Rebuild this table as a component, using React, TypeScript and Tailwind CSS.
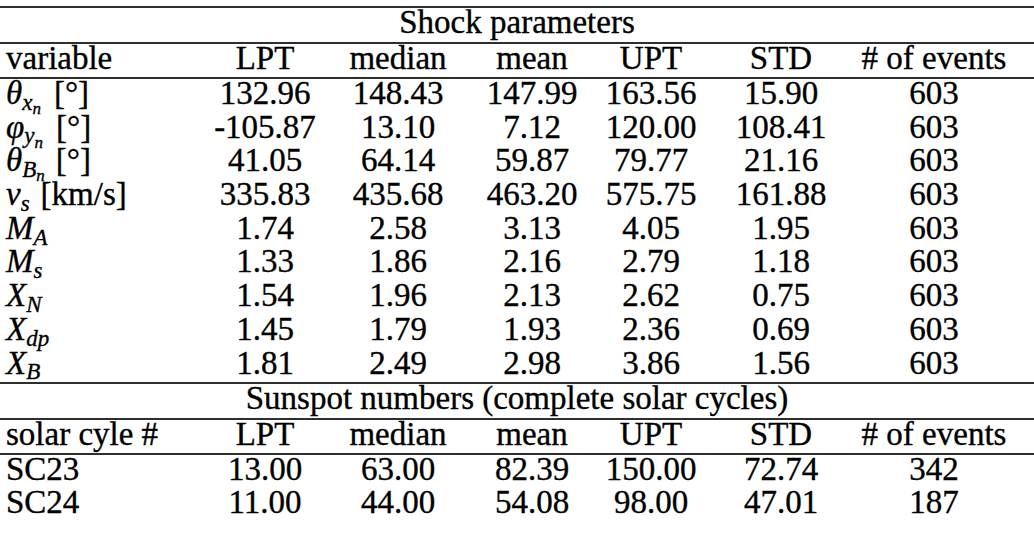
import React from "react";

const COLS =
  "grid grid-cols-[199px_132px_134px_134px_104px_156px_150px] w-full";

function Rule() {
  return <div className="h-[2px] w-full bg-[#2e2e2e]" />;
}

function Sub({ children }: { children: React.ReactNode }) {
  return <sub className="italic text-[23px]">{children}</sub>;
}

function SubSub({ children }: { children: React.ReactNode }) {
  return <sub className="italic text-[17px]">{children}</sub>;
}

const labels: React.ReactNode[] = [
  <>
    <span className="italic">θ</span>
    <Sub>
      x<SubSub>n</SubSub>
    </Sub>
    <span className="ml-[13px]">[°]</span>
  </>,
  <>
    <span className="italic">φ</span>
    <Sub>
      y<SubSub>n</SubSub>
    </Sub>
    <span className="ml-[13px]">[°]</span>
  </>,
  <>
    <span className="italic">θ</span>
    <Sub>
      B<SubSub>n</SubSub>
    </Sub>
    <span className="ml-[11px]">[°]</span>
  </>,
  <>
    <span className="italic">v</span>
    <Sub>s</Sub>
    <span className="ml-[11px]">[km/s]</span>
  </>,
  <>
    <span className="italic">M</span>
    <Sub>A</Sub>
  </>,
  <>
    <span className="italic">M</span>
    <Sub>s</Sub>
  </>,
  <>
    <span className="italic">X</span>
    <Sub>N</Sub>
  </>,
  <>
    <span className="italic">X</span>
    <Sub>dp</Sub>
  </>,
  <>
    <span className="italic">X</span>
    <Sub>B</Sub>
  </>,
];

const shockData: string[][] = [
  ["132.96", "148.43", "147.99", "163.56", "15.90", "603"],
  ["-105.87", "13.10", "7.12", "120.00", "108.41", "603"],
  ["41.05", "64.14", "59.87", "79.77", "21.16", "603"],
  ["335.83", "435.68", "463.20", "575.75", "161.88", "603"],
  ["1.74", "2.58", "3.13", "4.05", "1.95", "603"],
  ["1.33", "1.86", "2.16", "2.79", "1.18", "603"],
  ["1.54", "1.96", "2.13", "2.62", "0.75", "603"],
  ["1.45", "1.79", "1.93", "2.36", "0.69", "603"],
  ["1.81", "2.49", "2.98", "3.86", "1.56", "603"],
];

const sunData: { label: string; values: string[] }[] = [
  { label: "SC23", values: ["13.00", "63.00", "82.39", "150.00", "72.74", "342"] },
  { label: "SC24", values: ["11.00", "44.00", "54.08", "98.00", "47.01", "187"] },
];

const headers = ["LPT", "median", "mean", "UPT", "STD", "# of events"];

function HeaderRow({ first }: { first: string }) {
  return (
    <div className={COLS + " h-[33px] leading-[29px]"}>
      <div className="pl-[6px] whitespace-nowrap">{first}</div>
      {headers.map((h) => (
        <div key={h} className="text-center whitespace-nowrap">
          {h}
        </div>
      ))}
    </div>
  );
}

function DataRow({
  label,
  values,
  height,
}: {
  label: React.ReactNode;
  values: string[];
  height: string;
}) {
  return (
    <div className={COLS + " leading-[29px] " + height}>
      <div className="pl-[6px] whitespace-nowrap">{label}</div>
      {values.map((v, i) => (
        <div key={i} className="text-center whitespace-nowrap">
          {v}
        </div>
      ))}
    </div>
  );
}

export default function App() {
  return (
    <div className="font-serif bg-white text-black">
      <div className="flex flex-col w-[1034px] h-[538px] pt-[6px] text-[33px] font-[Liberation_Serif] [-webkit-text-stroke:0.35px_black] overflow-hidden">
        <Rule />
        <div className="h-[34px] leading-[29px] text-center">Shock parameters</div>
        <Rule />
        <HeaderRow first="variable" />
        <Rule />
        {shockData.map((vals, i) => (
          <DataRow key={i} label={labels[i]} values={vals} height="h-[33.7px]" />
        ))}
        <Rule />
        <div className="h-[34px] leading-[29px] text-center">
          Sunspot numbers (complete solar cycles)
        </div>
        <Rule />
        <HeaderRow first="solar cyle #" />
        <Rule />
        {sunData.map((r) => (
          <DataRow key={r.label} label={r.label} values={r.values} height="h-[33px]" />
        ))}
      </div>
    </div>
  );
}
